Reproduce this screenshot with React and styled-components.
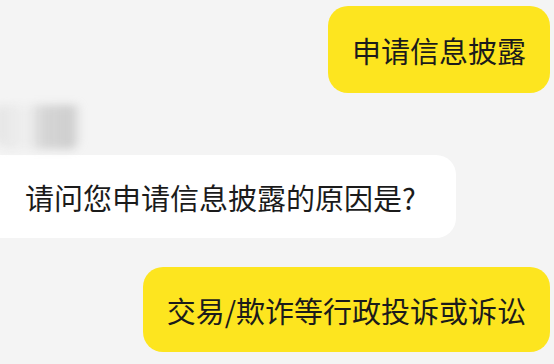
import React from 'react';
import styled, { createGlobalStyle } from 'styled-components';

const GlobalStyle = createGlobalStyle`
  html, body {
    margin: 0;
    padding: 0;
    background: #f4f4f4;
  }
`;

const Chat = styled.div`
  width: 554px;
  height: 364px;
  overflow: hidden;
  background: #f4f4f4;
  display: flex;
  flex-direction: column;
  font-family: "Noto Sans CJK SC", "Noto Sans", sans-serif;
  box-sizing: border-box;
  padding: 6px 4px 0 0;
`;

const Row = styled.div`
  display: flex;
  justify-content: ${p => (p.$mine ? 'flex-end' : 'flex-start')};
  margin-top: ${p => p.$gap || 0}px;
`;

const Bubble = styled.div`
  background: ${p => (p.$mine ? '#fde51f' : '#ffffff')};
  color: #1b1b1b;
  font-size: 29px;
  line-height: 38px;
  height: ${p => p.$h}px;
  box-sizing: border-box;
  display: flex;
  align-items: center;
  padding: ${p => (p.$mine ? '0 24px 0 24px' : '0 40px 0 45px')};
  margin-left: ${p => (p.$mine ? 0 : -20)}px;
  border-radius: 20px;
  white-space: nowrap;
`;

const SmudgeRow = styled.div`
  height: 62px;
  position: relative;
`;

// scribbled-out avatar/name area
const Smudge = styled.div`
  position: absolute;
  left: -6px;
  top: 12px;
  width: 88px;
  height: 44px;
  background:
    linear-gradient(90deg, rgba(200,200,200,0.35) 0%, rgba(225,225,225,0.2) 38%, rgba(170,170,170,0.4) 55%, rgba(160,160,160,0.45) 88%, rgba(210,210,210,0) 100%);
  filter: blur(4px);
  border-radius: 8px 4px 12px 16px;
`;

export default function App() {
  return (
    <>
      <GlobalStyle />
      <Chat>
        <Row $mine>
          <Bubble $mine $h={87}>申请信息披露</Bubble>
        </Row>
        <SmudgeRow>
          <Smudge />
        </SmudgeRow>
        <Row>
          <Bubble $h={83}>请问您申请信息披露的原因是?</Bubble>
        </Row>
        <Row $mine $gap={29}>
          <Bubble $mine $h={85}>交易/欺诈等行政投诉或诉讼</Bubble>
        </Row>
      </Chat>
    </>
  );
}
